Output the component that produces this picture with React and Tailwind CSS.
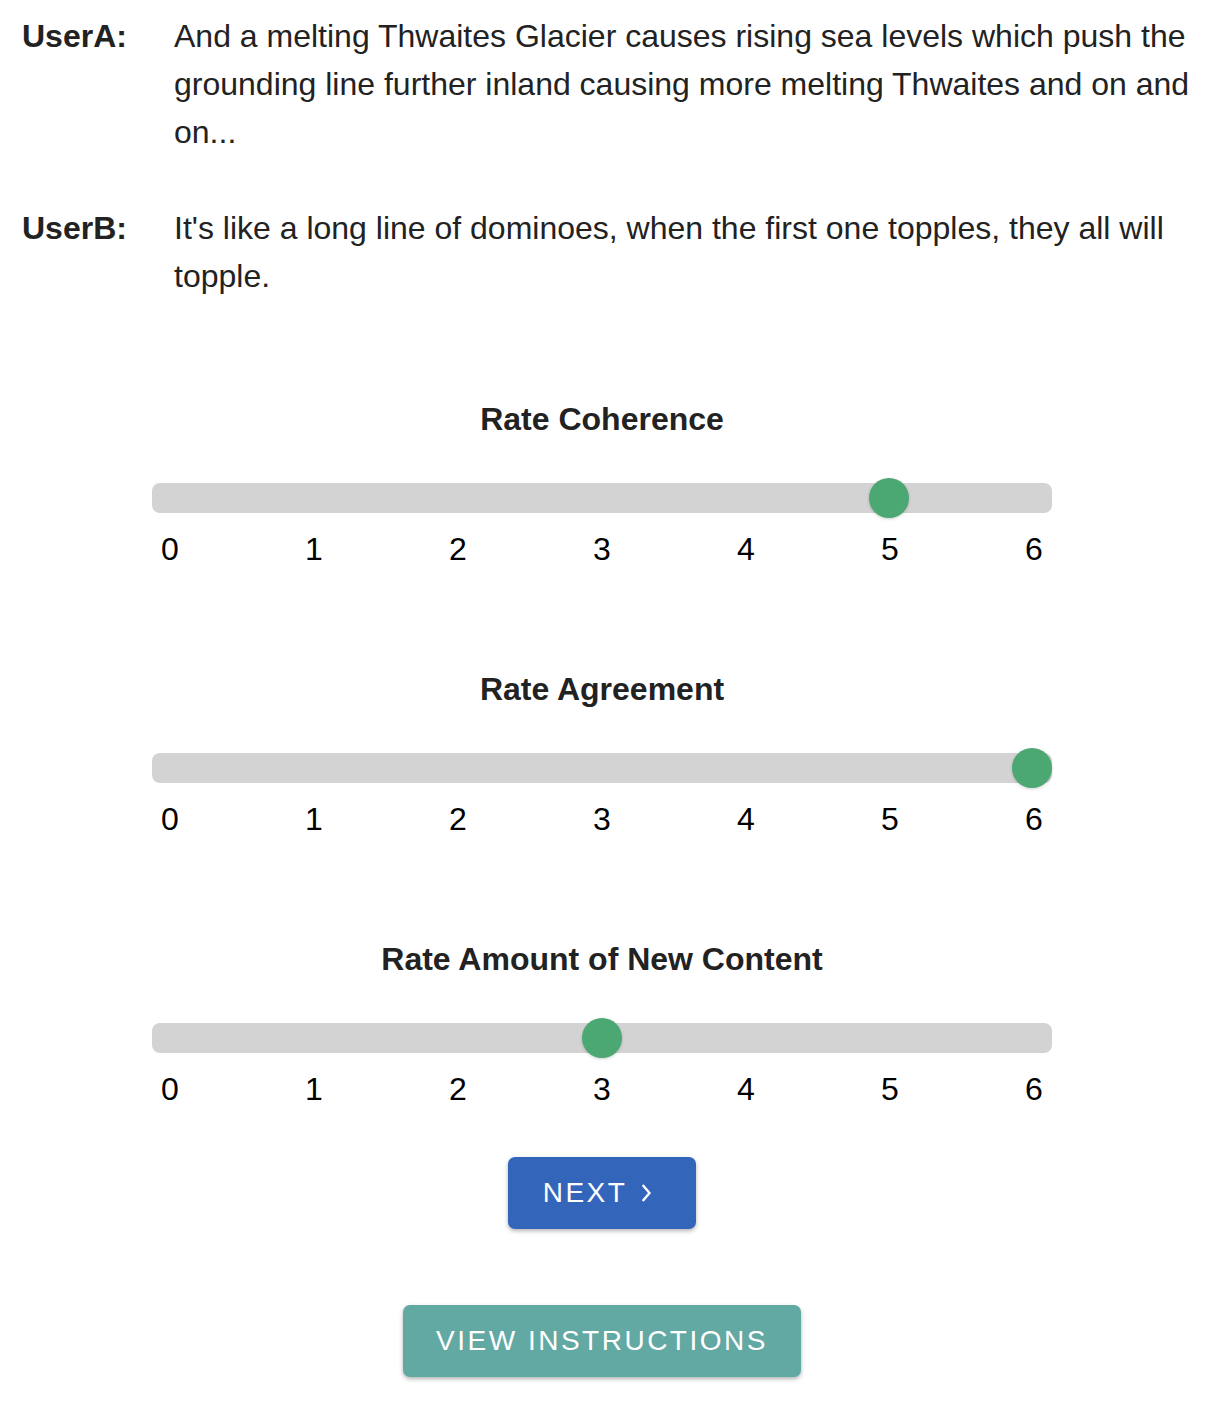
import React from 'react';

const dialogue = [
  {
    speaker: 'UserA:',
    text: 'And a melting Thwaites Glacier causes rising sea levels which push the grounding line further inland causing more melting Thwaites and on and on...',
  },
  {
    speaker: 'UserB:',
    text: "It's like a long line of dominoes, when the first one topples, they all will topple.",
  },
];

const ratings = [
  { title: 'Rate Coherence', value: 5 },
  { title: 'Rate Agreement', value: 6 },
  { title: 'Rate Amount of New Content', value: 3 },
];

function Slider({ title, value }) {
  return (
    <div className="flex flex-col items-center">
      <h2 className="h-[48px] leading-[48px] text-[32px] font-bold text-[#222]">{title}</h2>
      <div className="relative mt-[40px] h-[30px] w-[900px] rounded-[8px] bg-[#d3d3d3]">
        {/* thumb */}
        <div
          className="absolute top-[-5px] h-[40px] w-[40px] rounded-full bg-[#4ba873] shadow-[0_1px_3px_rgba(0,0,0,0.2)]"
          style={{ left: `${(value / 6) * 860}px` }}
        />
      </div>
      <div className="mt-[12px] flex w-[900px] justify-between">
        {[0, 1, 2, 3, 4, 5, 6].map((n) => (
          <span key={n} className="w-[36px] text-center text-[32px] leading-[48px] text-black">
            {n}
          </span>
        ))}
      </div>
    </div>
  );
}

export default function App() {
  return (
    <div className="w-[1204px] bg-white pt-[12px] pb-[31px] font-['Liberation_Sans',Arial,sans-serif]">
      {/* dialogue */}
      <div className="flex flex-col gap-[48px] pl-[22px] pr-[14px]">
        {dialogue.map((d) => (
          <div key={d.speaker} className="flex">
            <div className="w-[152px] shrink-0 text-[32px] leading-[48px] font-bold text-[#222]">{d.speaker}</div>
            <div className="flex-1 text-[32px] leading-[48px] text-[#222]">{d.text}</div>
          </div>
        ))}
      </div>

      {/* ratings */}
      <div className="mt-[95px] flex flex-col gap-[92px]">
        {ratings.map((r) => (
          <Slider key={r.title} title={r.title} value={r.value} />
        ))}
      </div>

      {/* buttons */}
      <div className="mt-[44px] flex flex-col items-center">
        <button className="flex h-[72px] w-[188px] items-center justify-center rounded-[7px] bg-[#3365ba] text-[28px] tracking-[2.5px] text-white shadow-[0_2px_4px_rgba(0,0,0,0.3)]">
          <span>NEXT</span>
          <svg className="ml-[12px] h-[22px] w-[22px]" viewBox="0 0 22 22" fill="none">
            <path d="M4.5 4 L10.5 11 L4.5 18" stroke="white" strokeWidth="2.4" strokeLinecap="square" strokeLinejoin="miter" />
          </svg>
        </button>
        <button className="mt-[76px] flex h-[72px] w-[398px] items-center justify-center rounded-[7px] bg-[#62a8a3] text-[28px] tracking-[2.5px] text-white shadow-[0_2px_4px_rgba(0,0,0,0.3)]">
          VIEW INSTRUCTIONS
        </button>
      </div>
    </div>
  );
}
